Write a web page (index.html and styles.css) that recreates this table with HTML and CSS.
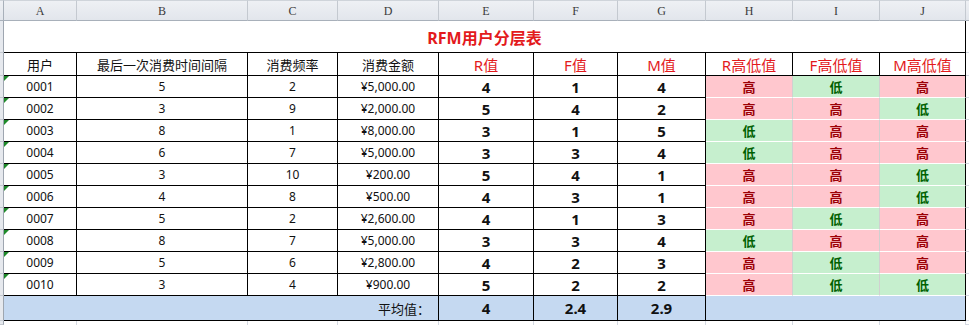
FILE: index.html
```html
<!DOCTYPE html>
<html lang="zh-CN">
<head>
<meta charset="utf-8">
<title>RFM用户分层表</title>
<link rel="stylesheet" href="styles.css">
</head>
<body>
<div class="sheet">
  <!-- column headers -->
  <div class="corner"></div>
  <div class="ch">A</div><div class="ch">B</div><div class="ch">C</div><div class="ch">D</div><div class="ch">E</div>
  <div class="ch">F</div><div class="ch">G</div><div class="ch">H</div><div class="ch">I</div><div class="ch">J</div>
  <div class="ch ch-x"></div>

  <!-- title -->
  <div class="rh"></div>
  <div class="title">RFM用户分层表</div>
  <div class="x"></div>

  <!-- header row -->
  <div class="rh"></div>
  <div class="th">用户</div><div class="th">最后一次消费时间间隔</div><div class="th">消费频率</div><div class="th">消费金额</div>
  <div class="th red">R值</div><div class="th red">F值</div><div class="th red">M值</div>
  <div class="th red">R高低值</div><div class="th red">F高低值</div><div class="th red last">M高低值</div>
  <div class="x"></div>

  <div class="rh"></div><div class="td id">0001</div><div class="td">5</div><div class="td">2</div><div class="td">¥5,000.00</div><div class="td num">4</div><div class="td num">1</div><div class="td num">4</div><div class="td hi">高</div><div class="td lo">低</div><div class="td hi last">高</div><div class="x"></div>
  <div class="rh"></div><div class="td id">0002</div><div class="td">3</div><div class="td">9</div><div class="td">¥2,000.00</div><div class="td num">5</div><div class="td num">4</div><div class="td num">2</div><div class="td hi">高</div><div class="td hi">高</div><div class="td lo last">低</div><div class="x"></div>
  <div class="rh"></div><div class="td id">0003</div><div class="td">8</div><div class="td">1</div><div class="td">¥8,000.00</div><div class="td num">3</div><div class="td num">1</div><div class="td num">5</div><div class="td lo">低</div><div class="td hi">高</div><div class="td hi last">高</div><div class="x"></div>
  <div class="rh"></div><div class="td id">0004</div><div class="td">6</div><div class="td">7</div><div class="td">¥5,000.00</div><div class="td num">3</div><div class="td num">3</div><div class="td num">4</div><div class="td lo">低</div><div class="td hi">高</div><div class="td hi last">高</div><div class="x"></div>
  <div class="rh"></div><div class="td id">0005</div><div class="td">3</div><div class="td">10</div><div class="td">¥200.00</div><div class="td num">5</div><div class="td num">4</div><div class="td num">1</div><div class="td hi">高</div><div class="td hi">高</div><div class="td lo last">低</div><div class="x"></div>
  <div class="rh"></div><div class="td id">0006</div><div class="td">4</div><div class="td">8</div><div class="td">¥500.00</div><div class="td num">4</div><div class="td num">3</div><div class="td num">1</div><div class="td hi">高</div><div class="td hi">高</div><div class="td lo last">低</div><div class="x"></div>
  <div class="rh"></div><div class="td id">0007</div><div class="td">5</div><div class="td">2</div><div class="td">¥2,600.00</div><div class="td num">4</div><div class="td num">1</div><div class="td num">3</div><div class="td hi">高</div><div class="td lo">低</div><div class="td hi last">高</div><div class="x"></div>
  <div class="rh"></div><div class="td id">0008</div><div class="td">8</div><div class="td">7</div><div class="td">¥5,000.00</div><div class="td num">3</div><div class="td num">3</div><div class="td num">4</div><div class="td lo">低</div><div class="td hi">高</div><div class="td hi last">高</div><div class="x"></div>
  <div class="rh"></div><div class="td id">0009</div><div class="td">5</div><div class="td">6</div><div class="td">¥2,800.00</div><div class="td num">4</div><div class="td num">2</div><div class="td num">3</div><div class="td hi">高</div><div class="td lo">低</div><div class="td hi last">高</div><div class="x"></div>
  <div class="rh"></div><div class="td id">0010</div><div class="td">3</div><div class="td">4</div><div class="td">¥900.00</div><div class="td num">5</div><div class="td num">2</div><div class="td num">2</div><div class="td hi">高</div><div class="td lo">低</div><div class="td lo last">低</div><div class="x"></div>

  <!-- average row -->
  <div class="rh"></div>
  <div class="avg avg-label">平均值：</div>
  <div class="avg num">4</div><div class="avg num">2.4</div><div class="avg num">2.9</div>
  <div class="avg avg-blank"></div>
  <div class="x"></div>

  <!-- empty row -->
  <div class="rh"></div>
  <div class="e"></div><div class="e"></div><div class="e"></div><div class="e"></div><div class="e"></div>
  <div class="e"></div><div class="e"></div><div class="e"></div><div class="e"></div><div class="e"></div>
  <div class="x"></div>
</div>
</body>
</html>
```

FILE: styles.css
```css
html, body {
  margin: 0;
  padding: 0;
  background: #ffffff;
  overflow: hidden;
}

.sheet {
  display: grid;
  width: 969px;
  height: 325px;
  grid-template-columns: 4px 73px 171px 90px 101px 95px 84px 88px 87px 87px 86px 1fr;
  grid-template-rows: 21px 32px 23px repeat(10, 22px) 25px 1fr;
  font-family: "Noto Sans", "Noto Sans CJK SC", sans-serif;
  font-size: 12px;
  color: #111;
  overflow: hidden;
}

.sheet > div {
  box-sizing: border-box;
  display: flex;
  align-items: center;
  justify-content: center;
  min-width: 0;
  white-space: nowrap;
}

/* column header strip */
.corner,
.ch {
  background: linear-gradient(#eef0f4, #e2e6ec);
  border-right: 1px solid #c4c9d0;
  border-bottom: 1px solid #a8b0ba;
  border-top: 1px solid #cfd4da;
  font-family: "Liberation Serif", "DejaVu Serif", serif;
  font-size: 12px;
  color: #3a3a3a;
  padding-top: 1px;
}
.corner {
  border-right: 1px solid #a8b0ba;
}
.ch-x {
  border-right: none;
}

/* row header gutter */
.rh {
  background: #e6e9ee;
  border-right: 1px solid #9ea6b0;
  border-bottom: 1px solid #c4c9d0;
}

/* empty area right of the table */
.x {
  border-bottom: 1px solid #d4d9e2;
}

/* title */
.title {
  grid-column: span 10;
  border-right: 1px solid #000;
  border-bottom: 1px solid #000;
  font-size: 16px;
  font-weight: 700;
  color: #e31a1c;
  padding-top: 1px;
}

/* header row */
.th {
  border-right: 1px solid #000;
  border-bottom: 1px solid #000;
  font-size: 13px;
  color: #111;
}
.th.red {
  color: #e31a1c;
  font-size: 15px;
}

/* data cells */
.td {
  position: relative;
  border-right: 1px solid #000;
  border-bottom: 1px solid #000;
  font-size: 12px;
}
.td.id::before {
  content: "";
  position: absolute;
  left: 0;
  top: 0;
  border-top: 5px solid #1f8a2a;
  border-right: 5px solid transparent;
}

.num {
  font-size: 15px;
  font-weight: 700;
  color: #111;
}

.hi,
.lo {
  font-size: 13px;
  font-weight: 700;
  border-right-color: #d0d0d0;
  border-bottom-color: #ffffff;
}
.hi {
  background: #ffc7ce;
  color: #9c0006;
}
.lo {
  background: #c6efce;
  color: #006100;
}
.td.last {
  border-right-color: #000;
}

/* average row */
.avg {
  background: #c5d9f1;
  border-right: 1px solid #000;
  border-bottom: 1px solid #000;
}
.sheet > .avg-label {
  grid-column: span 4;
  justify-content: flex-end;
  padding-right: 8px;
  font-size: 13px;
}
.avg-blank {
  grid-column: span 3;
}

/* blank row below */
.e {
  border-right: 1px solid #d4d9e2;
}
```
